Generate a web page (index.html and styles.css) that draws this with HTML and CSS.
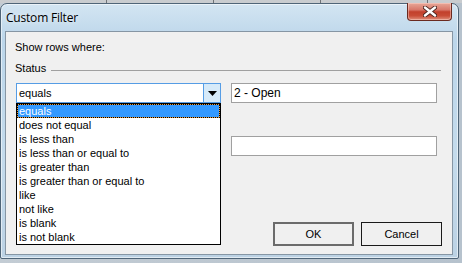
FILE: index.html
```html
<!DOCTYPE html>
<html lang="en">
<head>
    <meta charset="UTF-8">
    <title>Custom Filter</title>
    <link rel="stylesheet" href="styles.css">
</head>
<body>
    <div class="backdrop-top"></div>

    <div class="window">
        <div class="title-bar">
            <span class="title">Custom Filter</span>
            <button class="close-btn" type="button" aria-label="Close">
                <svg width="14" height="11" viewBox="0 0 14 11">
                    <path d="M2 1.5 L12 9.5 M12 1.5 L2 9.5" stroke="#4a2620" stroke-width="4.2" stroke-linecap="round"/>
                    <path d="M2 1.5 L12 9.5 M12 1.5 L2 9.5" stroke="#fff" stroke-width="2.4" stroke-linecap="round"/>
                </svg>
            </button>
        </div>

        <div class="client">
            <p class="prompt">Show rows where:</p>

            <div class="group-head">
                <span>Status</span>
                <span class="rule"></span>
            </div>

            <div class="filter-row">
                <div class="combo">
                    <span class="combo-value">equals</span>
                    <span class="combo-arrow">
                        <svg width="9" height="5" viewBox="0 0 9 5"><path d="M0 0 H9 L4.5 5 Z" fill="#000"/></svg>
                    </span>

                    <ul class="combo-list">
                        <li class="selected">equals</li>
                        <li>does not equal</li>
                        <li>is less than</li>
                        <li>is less than or equal to</li>
                        <li>is greater than</li>
                        <li>is greater than or equal to</li>
                        <li>like</li>
                        <li>not like</li>
                        <li>is blank</li>
                        <li>is not blank</li>
                    </ul>
                </div>
                <input class="value-box" type="text" value="2 - Open">
            </div>

            <div class="filter-row second">
                <input class="value-box" type="text" value="">
            </div>

            <div class="buttons">
                <button class="btn default" type="button">OK</button>
                <button class="btn" type="button">Cancel</button>
            </div>
        </div>
    </div>
</body>
</html>
```

FILE: styles.css
```css
body {
    margin: 0;
    width: 462px;
    height: 263px;
    overflow: hidden;
    background: linear-gradient(90deg, #c3ccd4 0%, #b6c2cd 100%);
    font-family: "Liberation Sans", Arial, sans-serif;
    font-size: 11px;
    color: #000;
}

.backdrop-top {
    height: 3px;
    background: repeating-linear-gradient(90deg, #c9cccf 0 106px, #6f7377 106px 107px);
}

.window {
    position: relative;
    box-sizing: border-box;
    width: 459px;
    height: 256px;
    padding: 0 5px 3px 4px;
    border: 1px solid #4f6578;
    border-radius: 7px 7px 2px 2px;
    background: linear-gradient(180deg, #d3e5f2 0%, #bcd6ea 14%, #c4dbec 60%, #bcd2e4 100%);
    box-shadow: inset 0 0 0 1px rgba(255, 255, 255, 0.55);
    display: flex;
    flex-direction: column;
}

.title-bar {
    height: 27px;
    padding-left: 1px;
    display: flex;
    align-items: center;
}

.title {
    font-family: "Open Sans", "Noto Sans", sans-serif;
    font-size: 12px;
    letter-spacing: -0.2px;
    color: #000;
    margin-top: 0;
    text-shadow: 0 0 6px rgba(255, 255, 255, 0.9);
}

.close-btn {
    position: absolute;
    top: -1px;
    right: 6px;
    width: 45px;
    height: 18px;
    padding: 0;
    border: 1px solid #6a2a20;
    border-top: none;
    border-radius: 0 0 4px 4px;
    background: linear-gradient(180deg, #e8a898 0%, #d8786a 40%, #c2402c 52%, #c84c36 75%, #e0907c 100%);
    box-shadow: inset 0 0 0 1px rgba(255, 220, 210, 0.45);
    display: flex;
    align-items: center;
    justify-content: center;
}

.client {
    box-sizing: border-box;
    flex: 1;
    border: 1px solid #8696a4;
    background: #f0f0f0;
    padding: 9px 0 8px 0;
    display: flex;
    flex-direction: column;
}

.prompt {
    margin: 0 0 0 9px;
    line-height: 13px;
}

.group-head {
    margin: 8px 11px 0 9px;
    display: flex;
    line-height: 13px;
}

.group-head .rule {
    flex: 1;
    height: 1px;
    margin: 8px 0 0 5px;
    background: #a0a0a0;
}

.filter-row {
    margin: 8px 0 0 10px;
    display: flex;
    gap: 10px;
}

.filter-row.second {
    margin-top: 33px;
    padding-left: 215px;
}

.combo {
    position: relative;
    box-sizing: border-box;
    width: 205px;
    height: 20px;
    border: 1px solid #569de5;
    background: #fff;
    display: flex;
}

.combo-value {
    flex: 1;
    padding-left: 2px;
    line-height: 18px;
}

.combo-arrow {
    width: 16px;
    border-left: 1px solid #569de5;
    background: #d6eaf9;
    display: flex;
    align-items: center;
    justify-content: center;
}

.combo-list {
    position: absolute;
    top: 19px;
    left: -1px;
    z-index: 2;
    box-sizing: border-box;
    width: 205px;
    margin: 0;
    padding: 0;
    list-style: none;
    border: 1px solid #000;
    background: #fff;
}

.combo-list li {
    height: 14px;
    line-height: 14px;
    padding-left: 2px;
    white-space: nowrap;
}

.combo-list li.selected {
    box-sizing: border-box;
    padding-left: 1px;
    line-height: 12px;
    border: 1px dotted #000;
    color: #fff;
    background: linear-gradient(#3399ff, #3399ff) padding-box, linear-gradient(#e89a3a, #e89a3a) border-box;
}

.value-box {
    box-sizing: border-box;
    width: 206px;
    height: 20px;
    margin: 0;
    padding: 0 2px;
    border: 1px solid #a0a0a0;
    background: #fff;
    font-family: "Liberation Sans", Arial, sans-serif;
    font-size: 12px;
    color: #000;
    outline: none;
}

.buttons {
    margin-top: auto;
    padding-right: 10px;
    display: flex;
    justify-content: flex-end;
    gap: 7px;
}

.btn {
    box-sizing: border-box;
    width: 81px;
    height: 24px;
    border: 1px solid #1a1a1a;
    background: #f0f0f0;
    font-family: "Liberation Sans", Arial, sans-serif;
    font-size: 11px;
    color: #000;
    padding: 0;
}

.btn.default {
    border: 2px solid #6b6b6b;
}
```
